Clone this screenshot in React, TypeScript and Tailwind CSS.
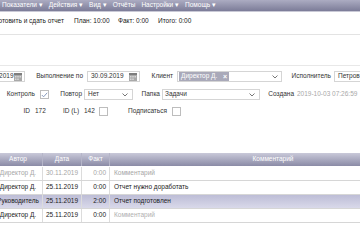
function Calendar() {
  return (
    <svg width="8" height="8" viewBox="0 0 8 8" className="shrink-0">
      <rect x="0" y="0" width="8" height="8" fill="#a9a9a9" />
      <rect x="0" y="0" width="8" height="2" fill="#7d7d7d" />
      <rect x="1" y="3" width="1.5" height="1.5" fill="#d8d8d8" />
      <rect x="3.25" y="3" width="1.5" height="1.5" fill="#d8d8d8" />
      <rect x="5.5" y="3" width="1.5" height="1.5" fill="#d8d8d8" />
      <rect x="1" y="5.5" width="1.5" height="1.5" fill="#d8d8d8" />
      <rect x="3.25" y="5.5" width="1.5" height="1.5" fill="#d8d8d8" />
    </svg>
  );
}

function Chevron() {
  return (
    <svg width="6" height="4" viewBox="0 0 6 4" className="shrink-0">
      <path d="M0.5 0.5 L3 3 L5.5 0.5" fill="none" stroke="#777" strokeWidth="1" />
    </svg>
  );
}

function Check({ checked }: { checked?: boolean }) {
  return (
    <div className="w-[9px] h-[9px] border border-[#bdbdbd] bg-white flex items-center justify-center shrink-0">
      {checked && (
        <svg width="7" height="6" viewBox="0 0 7 6">
          <path d="M0.8 3 L2.6 4.8 L6.2 0.8" fill="none" stroke="#7a8fb5" strokeWidth="0.9" />
        </svg>
      )}
    </div>
  );
}

const menu = ["Показатели ▾", "Действия ▾", "Вид ▾", "Отчёты", "Настройки ▾", "Помощь ▾"];

const rows = [
  { author: "Директор Д.", date: "30.11.2019", fact: "0:00", comment: "Комментарий", muted: true },
  { author: "Директор Д.", date: "25.11.2019", fact: "0:00", comment: "Отчет нужно доработать" },
  { author: "Руководитель", date: "25.11.2019", fact: "2:00", comment: "Отчет подготовлен", active: true },
  { author: "Директор Д.", date: "25.11.2019", fact: "0:00", comment: "Комментарий", placeholder: true },
];

export default function App() {
  return (
    <div className="w-[360px] h-[240px] overflow-hidden bg-white font-['Liberation_Sans',Arial,sans-serif] text-[6.5px] text-[#333] leading-none">
      {/* top menu */}
      <div className="h-[12px] bg-gradient-to-b from-[#acacc2] to-[#7c7c98] border-b border-[#c9c9d6] flex items-center gap-[6px] pl-[2px] text-white whitespace-nowrap">
        {menu.map((m) => (
          <span key={m}>{m}</span>
        ))}
      </div>

      {/* task bar */}
      <div className="h-[23px] border-b border-[#e3e3e3] flex items-start pt-[6px] whitespace-nowrap text-[#222]">
        <span className="ml-[-46px] w-[110px] text-right shrink-0">Подготовить и сдать отчет</span>
        <span className="ml-[10px] w-[44px] shrink-0">План: 10:00</span>
        <span className="w-[40px] shrink-0">Факт: 0:00</span>
        <span>Итого: 0:00</span>
      </div>

      <div className="h-[31px] border-b border-[#e8e8e8]" />

      {/* row 1 */}
      <div className="mt-[5px] h-[11px] flex items-center whitespace-nowrap">
        <div className="ml-[-24px] w-[49px] h-[11px] border border-[#d5d5d5] flex items-center justify-between pl-[4px] pr-[2px] shrink-0">
          <span>01.09.2019</span>
          <Calendar />
        </div>
        <span className="w-[62px] text-right pr-[4px] shrink-0">Выполнение по</span>
        <div className="w-[53px] h-[11px] border border-[#d5d5d5] flex items-center justify-between pl-[3px] pr-[2px] shrink-0">
          <span>30.09.2019</span>
          <Calendar />
        </div>
        <span className="w-[37px] text-right pr-[4px] shrink-0">Клиент</span>
        <div className="w-[105px] h-[11px] border border-[#d5d5d5] flex items-center justify-between pl-[1px] pr-[3px] shrink-0">
          <span className="w-[50px] h-[9px] bg-[#a9a9b9] text-white flex items-center justify-between px-[2px]">
            Директор Д.<span className="font-bold text-[7px]">×</span>
          </span>
          <Chevron />
        </div>
        <span className="w-[52px] text-right pr-[3px] shrink-0">Исполнитель</span>
        <div className="w-[60px] h-[11px] border border-[#d5d5d5] flex items-center pl-[3px] shrink-0">
          <span>Петров Н.</span>
        </div>
      </div>

      {/* row 2 */}
      <div className="mt-[7px] h-[11px] flex items-center whitespace-nowrap">
        <span className="w-[40px] text-right pr-[5px] shrink-0">Контроль</span>
        <Check checked />
        <span className="w-[35px] text-right pr-[2px] shrink-0">Повтор</span>
        <div className="w-[49px] h-[11px] border border-[#d5d5d5] flex items-center justify-between pl-[3px] pr-[4px] shrink-0">
          <span>Нет</span>
          <Chevron />
        </div>
        <span className="w-[29px] text-right pr-[2px] shrink-0">Папка</span>
        <div className="w-[98px] h-[11px] border border-[#d5d5d5] flex items-center justify-between pl-[2px] pr-[4px] shrink-0">
          <span>Задачи</span>
          <Chevron />
        </div>
        <span className="w-[37px] text-right pr-[3px] shrink-0">Создана</span>
        <span className="text-[#a8a8a8]">2019-10-03 07:26:59</span>
      </div>

      {/* row 3 */}
      <div className="mt-[6px] h-[10px] flex items-center whitespace-nowrap">
        <span className="w-[32px] text-right pr-[2px] shrink-0">ID</span>
        <span className="w-[31px] pl-[3px] shrink-0">172</span>
        <span className="w-[21px] shrink-0">ID (L)</span>
        <span className="w-[15px] shrink-0">142</span>
        <Check />
        <span className="w-[64px] text-right pr-[5px] shrink-0">Подписаться</span>
        <Check />
      </div>

      {/* comments table */}
      <div className="mt-[37px] ml-[-6px] w-[442px]">
        <div className="h-[13px] flex bg-gradient-to-b from-[#c9c9d9] to-[#8b8ba6] text-white">
          <div className="w-[49px] border-r border-[#b5b5c8] flex items-center justify-center">Автор</div>
          <div className="w-[39px] border-r border-[#b5b5c8] flex items-center justify-center">Дата</div>
          <div className="w-[28px] border-r border-[#b5b5c8] flex items-center justify-center">Факт</div>
          <div className="w-[326px] flex items-center justify-center">Комментарий</div>
        </div>
        <div className="h-[1px]" />
        {rows.map((r, i) => (
          <div
            key={i}
            className={`h-[14px] flex border-b border-[#d6d6d6] whitespace-nowrap ${
              r.active ? "bg-gradient-to-b from-[#bdbdd6] to-[#d9d9ea]" : "bg-white"
            } ${r.muted ? "text-[#a6a6a6]" : "text-[#222]"}`}
          >
            <div className="w-[49px] border-r border-[#dcdcdc] flex items-center justify-center">{r.author}</div>
            <div className="w-[39px] border-r border-[#dcdcdc] flex items-center justify-center">{r.date}</div>
            <div className="w-[28px] border-r border-[#dcdcdc] flex items-center justify-end pr-[3px]">{r.fact}</div>
            <div className={`w-[326px] flex items-center pl-[4px] ${r.placeholder ? "text-[#b0b0b0]" : ""}`}>
              {r.comment}
            </div>
          </div>
        ))}
      </div>
    </div>
  );
}
